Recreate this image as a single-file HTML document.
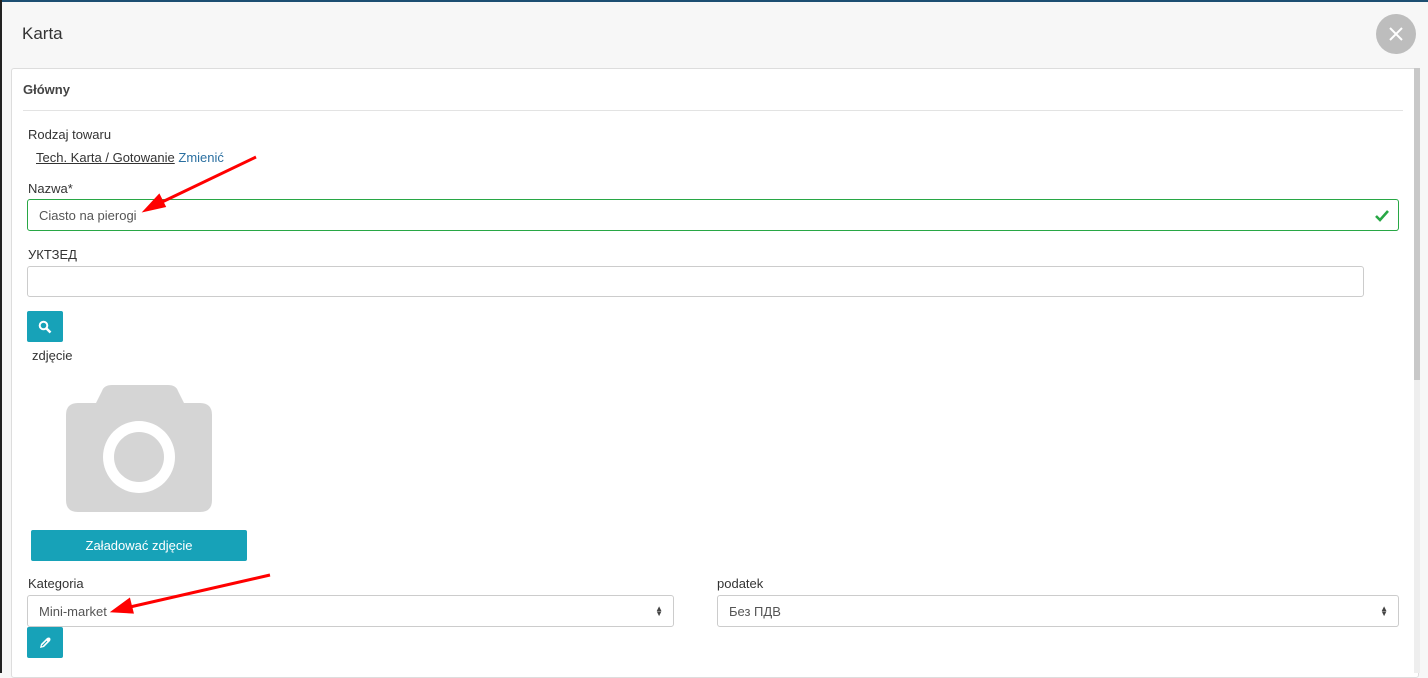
<!DOCTYPE html>
<html><head><meta charset="utf-8"><style>
*{box-sizing:border-box;margin:0;padding:0}
body{width:1428px;height:673px;overflow:hidden;background:#f7f7f7;font-family:"Liberation Sans",sans-serif;font-size:13px;color:#333;position:relative}
.a{position:absolute}
.lbl{position:absolute;font-size:13px;color:#333}
.inp{position:absolute;background:#fff;border:1px solid #ccc;border-radius:3px;font-size:13px;color:#555;padding-left:11px;display:flex;align-items:center}
.btn{position:absolute;background:#17a2b8;border-radius:2px;display:flex;align-items:center;justify-content:center}
.arr{position:absolute;right:10px;font-size:8px;line-height:5px;color:#444}
</style></head><body>
<div class="a" style="left:0;top:0;width:1428px;height:2px;background:#1d4f72"></div>
<div class="a" style="left:0;top:0;width:2px;height:673px;background:#222"></div>
<div class="a" style="left:22px;top:24px;font-size:17px;color:#333">Karta</div>
<div class="a" style="left:1376px;top:14px;width:40px;height:40px;border-radius:50%;background:#bdbdbd">
<svg width="40" height="40"><path d="M14 14L26 26M26 14L14 26" stroke="#fff" stroke-width="2"/></svg></div>
<div class="a" style="left:11px;top:68px;width:1408px;height:610px;background:#fff;border:1px solid #ddd;border-radius:3px"></div>
<div class="a" style="left:1414px;top:68px;width:6px;height:605px;background:#eee"></div>
<div class="a" style="left:1414px;top:68px;width:6px;height:312px;background:#c8c8c8"></div>
<div class="a" style="left:23px;top:82px;font-size:13px;font-weight:bold;color:#444">Główny</div>
<div class="a" style="left:23px;top:110px;width:1380px;height:1px;background:#e3e3e3"></div>
<div class="lbl" style="left:28px;top:127px">Rodzaj towaru</div>
<div class="lbl" style="left:36px;top:150px"><span style="text-decoration:underline">Tech. Karta / Gotowanie</span> <span style="color:#2a6fa0">Zmienić</span></div>
<div class="lbl" style="left:28px;top:181px">Nazwa*</div>
<div class="inp" style="left:27px;top:199px;width:1372px;height:32px;border-color:#28a745">Ciasto na pierogi
<svg class="a" style="right:8px;top:9px" width="16" height="14"><path d="M2 7l4 4 8-9" stroke="#28a745" stroke-width="2.6" fill="none"/></svg></div>
<div class="lbl" style="left:28px;top:247px">УКТЗЕД</div>
<div class="inp" style="left:27px;top:266px;width:1337px;height:31px"></div>
<div class="btn" style="left:27px;top:311px;width:36px;height:31px">
<svg width="14" height="14"><circle cx="5.5" cy="5.5" r="3.8" stroke="#fff" stroke-width="2" fill="none"/><path d="M8.5 8.5L12.5 12.5" stroke="#fff" stroke-width="2.5"/></svg></div>
<div class="lbl" style="left:32px;top:348px">zdjęcie</div>
<svg class="a" style="left:66px;top:385px" width="146" height="127"><path d="M46 0h56q8 0 10 6l6 12h16q12 0 12 12v85q0 12-12 12H12Q0 127 0 115V30q0-12 12-12h18l6-12q2-6 10-6z" fill="#d5d5d5"/><circle cx="73" cy="72" r="36" fill="#fff"/><circle cx="73" cy="72" r="25" fill="#d5d5d5"/></svg>
<div class="btn" style="left:31px;top:530px;width:216px;height:31px;color:#fff;font-size:13px">Załadować zdjęcie</div>
<div class="lbl" style="left:28px;top:576px">Kategoria</div>
<div class="inp" style="left:27px;top:595px;width:647px;height:32px">Mini-market<div class="arr">▲<br>▼</div></div>
<div class="lbl" style="left:717px;top:576px">podatek</div>
<div class="inp" style="left:717px;top:595px;width:682px;height:32px">Без ПДВ<div class="arr">▲<br>▼</div></div>
<div class="btn" style="left:27px;top:627px;width:36px;height:31px">
<svg width="14" height="14"><path d="M2 12l1-4 6-6q2-1 3 0t0 3l-6 6z" fill="#fff"/><path d="M4 10l5-5" stroke="#17a2b8" stroke-width="1"/></svg></div>
<svg class="a" style="left:0;top:0" width="1428" height="673"><g stroke="#f00" stroke-width="3" fill="#f00">
<path d="M256 157L160 203"/><path d="M146 210l13-14 5 10z"/>
<path d="M270 575L130 607"/><path d="M114 611l15-11 3 12z"/></g></svg>
</body></html>
